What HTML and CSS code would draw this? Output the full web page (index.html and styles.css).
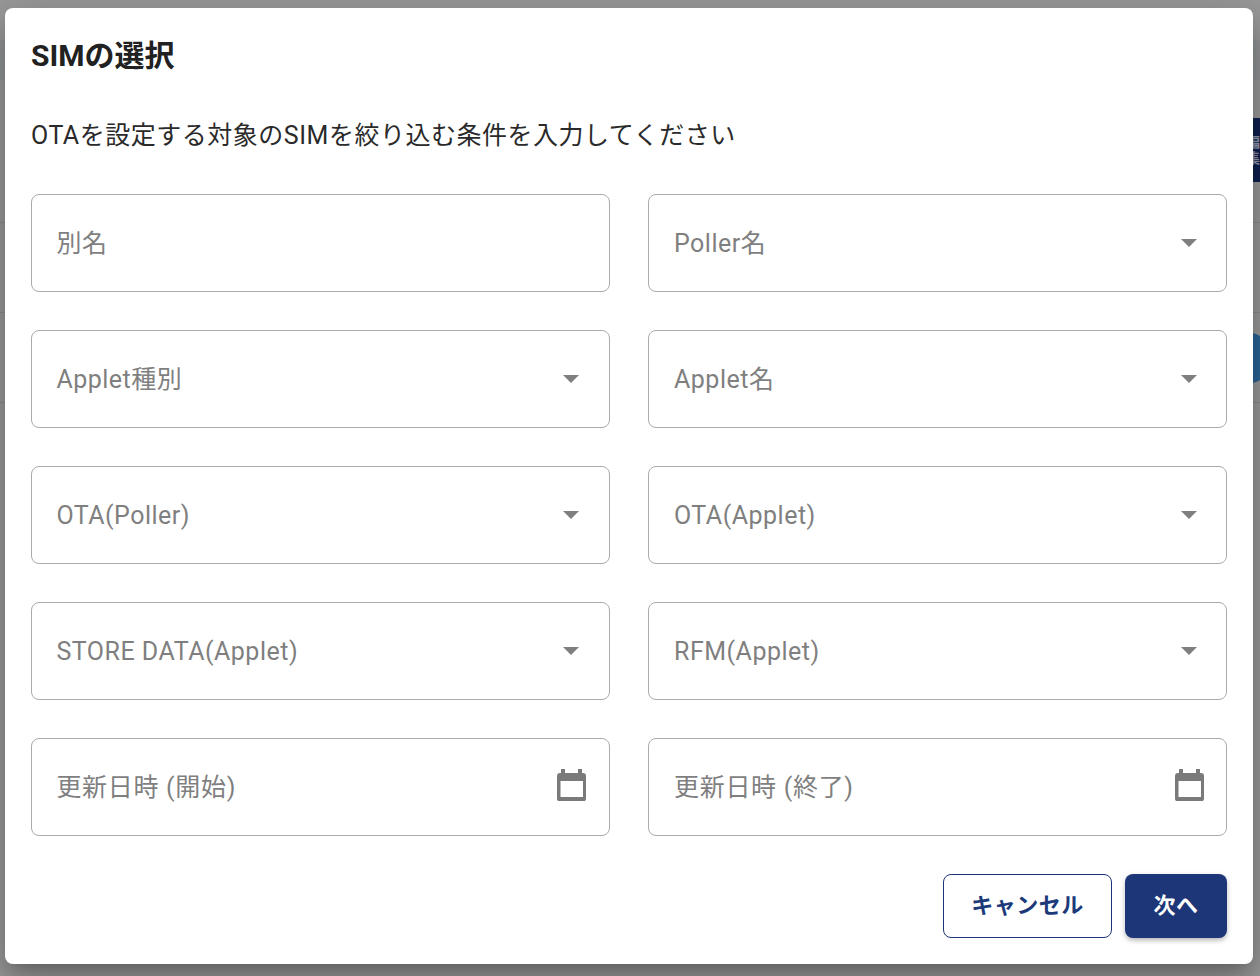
FILE: index.html
```html
<!DOCTYPE html>
<html lang="ja">
<head>
<meta charset="utf-8">
<title>SIMの選択</title>
<link rel="stylesheet" href="styles.css">
</head>
<body>
<div class="backdrop">
  <div class="bg-band"></div>
  <div class="bg-line l1"></div>
  <div class="bg-line l2"></div>
  <div class="bg-line l3"></div>
  <div class="bg-navy">編集</div>
  <div class="bg-circle">y</div>
</div>
<main class="dialog">
  <h1 class="title">SIMの選択</h1>
  <p class="desc">OTAを設定する対象のSIMを絞り込む条件を入力してください</p>
  <div class="grid">
    <div class="field"><span class="label">別名</span></div>
    <div class="field"><span class="label">Poller名</span><svg class="caret" viewBox="0 0 16 8"><path d="M0 0h16L8 8z"/></svg></div>
    <div class="field"><span class="label">Applet種別</span><svg class="caret" viewBox="0 0 16 8"><path d="M0 0h16L8 8z"/></svg></div>
    <div class="field"><span class="label">Applet名</span><svg class="caret" viewBox="0 0 16 8"><path d="M0 0h16L8 8z"/></svg></div>
    <div class="field"><span class="label">OTA(Poller)</span><svg class="caret" viewBox="0 0 16 8"><path d="M0 0h16L8 8z"/></svg></div>
    <div class="field"><span class="label">OTA(Applet)</span><svg class="caret" viewBox="0 0 16 8"><path d="M0 0h16L8 8z"/></svg></div>
    <div class="field"><span class="label">STORE DATA(Applet)</span><svg class="caret" viewBox="0 0 16 8"><path d="M0 0h16L8 8z"/></svg></div>
    <div class="field"><span class="label">RFM(Applet)</span><svg class="caret" viewBox="0 0 16 8"><path d="M0 0h16L8 8z"/></svg></div>
    <div class="field"><span class="label wide">更新日時 (開始)</span><svg class="cal" viewBox="0 0 29 32.5"><path fill-rule="evenodd" d="M4 0h4v4h13V0h4v4h1a3 3 0 0 1 3 3v22.5a3 3 0 0 1-3 3H3a3 3 0 0 1-3-3V7a3 3 0 0 1 3-3h1zM3.5 12v16H26V12z"/></svg></div>
    <div class="field"><span class="label wide">更新日時 (終了)</span><svg class="cal" viewBox="0 0 29 32.5"><path fill-rule="evenodd" d="M4 0h4v4h13V0h4v4h1a3 3 0 0 1 3 3v22.5a3 3 0 0 1-3 3H3a3 3 0 0 1-3-3V7a3 3 0 0 1 3-3h1zM3.5 12v16H26V12z"/></svg></div>
  </div>
  <div class="actions">
    <button class="btn btn-outline">キャンセル</button>
    <button class="btn btn-primary">次へ</button>
  </div>
</main>
</body>
</html>
```
FILE: styles.css
```css
* { box-sizing: border-box; }
html, body { margin: 0; height: 976px; overflow: hidden; }
body {
  background: #999;
  font-family: Roboto, "Noto Sans CJK JP", sans-serif;
  padding: 8px 7px 12px 5px;
  position: relative;
}
.backdrop { position: absolute; inset: 0; overflow: hidden; }
.bg-band { position: absolute; left: 0; top: 40px; width: 100%; height: 40px; background: #909395; }
.bg-line { position: absolute; left: 0; right: 0; height: 1px; background: #8a8a8a; }
.l1 { top: 222px; }
.l2 { top: 312px; }
.l3 { top: 402px; }
.bg-navy {
  position: absolute;
  right: 0;
  top: 118px;
  width: 32px;
  height: 64px;
  padding-left: 18px;
  background: #10214f;
  color: #8f97ad;
  font-size: 14px;
  line-height: 16px;
  font-weight: 700;
  display: flex;
  align-items: center;
  overflow: hidden;
}
.bg-circle {
  position: absolute;
  left: 1220px;
  top: 332px;
  width: 52px;
  height: 52px;
  border-radius: 50%;
  background: #2a6496;
  color: #9db8cf;
  font-size: 24px;
  font-style: italic;
  line-height: 46px;
  text-align: center;
}
.dialog {
  position: relative;
  height: 956px;
  background: #fff;
  border-radius: 8px;
  padding: 0 26px;
  display: flex;
  flex-direction: column;
  box-shadow: 0 11px 15px -7px rgba(0,0,0,.2), 0 24px 38px 3px rgba(0,0,0,.14), 0 9px 46px 8px rgba(0,0,0,.12);
}
.title {
  margin: 0;
  padding-top: 28px;
  font-size: 30px;
  line-height: 40px;
  font-weight: 700;
  color: #212121;
}
.desc {
  margin: 0;
  padding-top: 41px;
  font-size: 25px;
  line-height: 38px;
  color: #2a2a2a;
  letter-spacing: .52px;
}
.grid {
  margin-top: 39px;
  display: grid;
  grid-template-columns: 579px 579px;
  column-gap: 38px;
  row-gap: 38px;
}
.field {
  height: 98px;
  border: 1.5px solid #ababab;
  border-radius: 8px;
  padding: 0 22px 0 25px;
  display: flex;
  align-items: center;
  justify-content: space-between;
}
.field:nth-child(odd) { padding: 0 22.6px 0 24.4px; }
.label {
  font-size: 25px;
  line-height: 34px;
  padding-top: 2px;
  color: #7f7f7f;
  letter-spacing: .5px;
}
.label.wide { letter-spacing: .7px; }
.caret { width: 16px; height: 8px; fill: #7f7f7f; margin-right: 7px; }
.cal { width: 29px; height: 32.5px; fill: #7a7a7a; margin: -4px 0 0 0; }
.actions {
  margin-top: 38px;
  display: flex;
  justify-content: flex-end;
  gap: 13px;
}
.btn {
  height: 64px;
  border-radius: 8px;
  font-family: inherit;
  font-size: 22px;
  line-height: 28px;
  font-weight: 700;
  letter-spacing: .5px;
  padding: 0 0 1px;
}
.btn-outline { width: 169px; background: #fff; border: 1.5px solid #1c3677; color: #1c3a7a; }
.btn-primary {
  width: 102px;
  background: #1c3677;
  border: 0;
  color: #fff;
  box-shadow: 0 3px 5px -1px rgba(0,0,0,.2), 0 2px 6px 0 rgba(0,0,0,.14);
}
```
